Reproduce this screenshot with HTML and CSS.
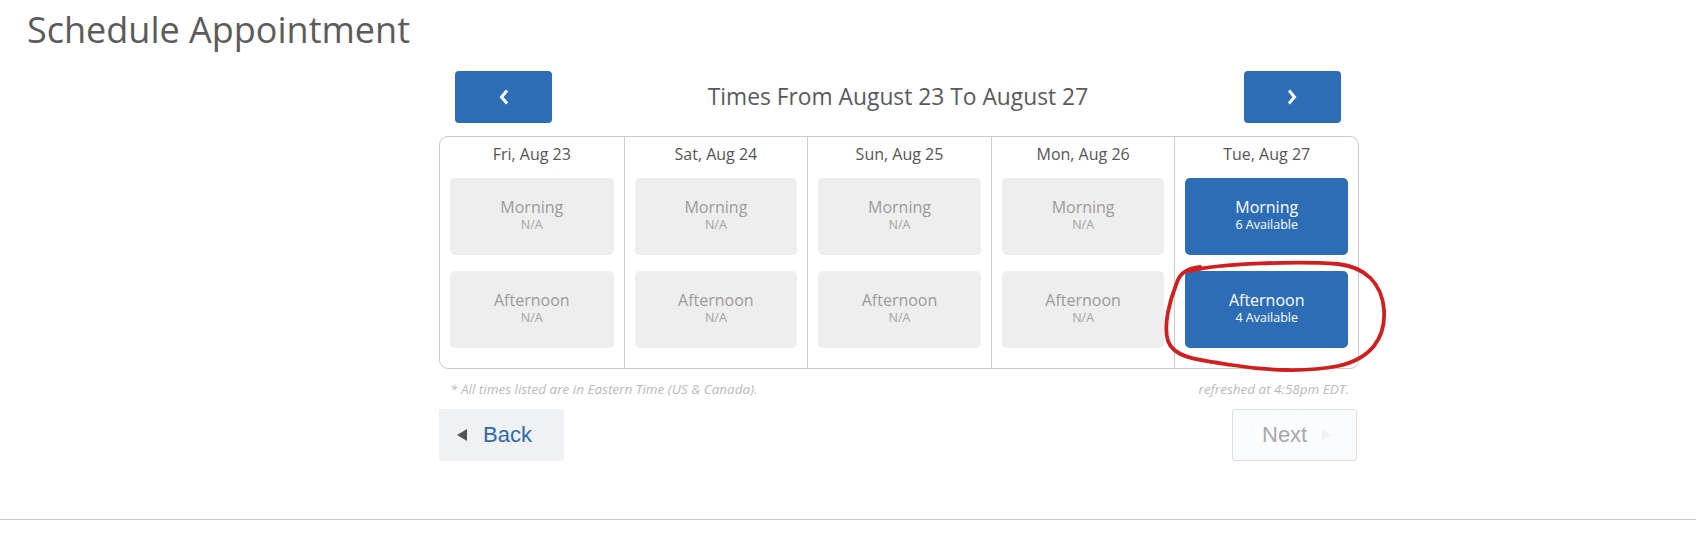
FILE: index.html
```html
<!DOCTYPE html>
<html>
<head>
  <meta charset="utf-8"/>
  <title>Schedule Appointment</title>
  <link rel="stylesheet" href="styles.css">
</head>
<body>

  <!-- ---------- PAGE TITLE ---------- -->
  <h1 class="page-title">Schedule Appointment</h1>

  <!-- ---------- SCHEDULER ---------- -->
  <div class="scheduler">

    <!-- Week navigation -->
    <div class="week-nav">
      <button type="button" class="nav-btn" aria-label="Previous week">
        <svg width="10" height="16" viewBox="0 0 10 16"><path d="M8 1.5 L2.5 8 L8 14.5" fill="none" stroke="#fff" stroke-width="3"/></svg>
      </button>
      <div class="week-title">Times From August 23 To August 27</div>
      <button type="button" class="nav-btn" aria-label="Next week">
        <svg width="10" height="16" viewBox="0 0 10 16"><path d="M2 1.5 L7.5 8 L2 14.5" fill="none" stroke="#fff" stroke-width="3"/></svg>
      </button>
    </div>

    <!-- Days grid -->
    <div class="days">
      <div class="day">
        <div class="day-name">Fri, Aug 23</div>
        <div class="slot"><span class="slot-name">Morning</span><span class="slot-count">N/A</span></div>
        <div class="slot"><span class="slot-name">Afternoon</span><span class="slot-count">N/A</span></div>
      </div>
      <div class="day">
        <div class="day-name">Sat, Aug 24</div>
        <div class="slot"><span class="slot-name">Morning</span><span class="slot-count">N/A</span></div>
        <div class="slot"><span class="slot-name">Afternoon</span><span class="slot-count">N/A</span></div>
      </div>
      <div class="day">
        <div class="day-name">Sun, Aug 25</div>
        <div class="slot"><span class="slot-name">Morning</span><span class="slot-count">N/A</span></div>
        <div class="slot"><span class="slot-name">Afternoon</span><span class="slot-count">N/A</span></div>
      </div>
      <div class="day">
        <div class="day-name">Mon, Aug 26</div>
        <div class="slot"><span class="slot-name">Morning</span><span class="slot-count">N/A</span></div>
        <div class="slot"><span class="slot-name">Afternoon</span><span class="slot-count">N/A</span></div>
      </div>
      <div class="day">
        <div class="day-name">Tue, Aug 27</div>
        <div class="slot open"><span class="slot-name">Morning</span><span class="slot-count">6 Available</span></div>
        <div class="slot open"><span class="slot-name">Afternoon</span><span class="slot-count">4 Available</span></div>
      </div>

      <!-- hand-drawn highlight over the afternoon slot -->
      <svg class="scribble" width="235" height="125" viewBox="0 0 235 125">
        <path d="M30 16 C60 8, 140 6, 178 9 C205 12, 222 28, 224 55 C226 84, 210 104, 178 111 C148 117, 108 116, 72 110 C38 105, 14 103, 8 86 C3 70, 10 45, 16 30 C19 20, 24 14, 40 12"
              fill="none" stroke="#cf2020" stroke-width="3.8" stroke-linecap="round"/>
      </svg>
    </div>

    <!-- Footnotes -->
    <div class="notes">
      <span>* All times listed are in Eastern Time (US &amp; Canada).</span>
      <span>refreshed at 4:58pm EDT.</span>
    </div>

    <!-- Back / Next -->
    <div class="actions">
      <button type="button" class="btn-back"><span class="tri-left"></span>Back</button>
      <button type="button" class="btn-next" disabled>Next<span class="tri-right"></span></button>
    </div>
  </div>

  <div class="page-footer"></div>

</body>
</html>
```

FILE: styles.css
```css
/* Basic reset */
* {
  box-sizing: border-box;
  margin: 0;
  padding: 0;
}
body {
  font-family: 'Open Sans', 'Noto Sans', sans-serif;
  background: #fff;
  color: #555;
}

/* ---------- TITLE ---------- */
.page-title {
  font-size: 36px;
  font-weight: 400;
  line-height: 40px;
  color: #5b5b5b;
  padding: 10px 0 0 27px;
}

/* ---------- SCHEDULER ---------- */
.scheduler {
  width: 920px;
  margin-left: 439px;
}
.week-nav {
  display: flex;
  align-items: center;
  justify-content: space-between;
  margin-top: 21px;
  padding: 0 18px 0 16px;
}
.nav-btn {
  width: 97px;
  height: 52px;
  background: #2c6db6;
  border: none;
  border-radius: 4px;
  display: flex;
  align-items: center;
  justify-content: center;
  cursor: pointer;
}
.week-title {
  font-size: 22.8px;
  color: #5a5a5a;
  margin-top: -2px;
}

/* ---------- DAYS GRID ---------- */
.days {
  position: relative;
  display: grid;
  grid-template-columns: repeat(5, 1fr);
  margin-top: 13px;
  border: 1px solid #cacaca;
  border-radius: 9px;
}
.day {
  padding: 6px 10px 20px;
  display: flex;
  flex-direction: column;
  gap: 16px;
}
.day + .day {
  border-left: 1px solid #cccccc;
}
.day-name {
  text-align: center;
  font-size: 16px;
  line-height: 22px;
  color: #555;
  margin-bottom: -3px;
}
.slot {
  height: 77px;
  background: #eeeeee;
  border-radius: 5px;
  display: flex;
  flex-direction: column;
  align-items: center;
  justify-content: center;
  padding-bottom: 4px;
  color: #9b9b9b;
}
.slot-name {
  font-size: 16px;
  line-height: 20px;
}
.slot-count {
  font-size: 12.5px;
  line-height: 15px;
  color: #a3a3a3;
}
.slot.open {
  background: #2c6db6;
  color: #fff;
}
.slot.open .slot-count {
  color: #fff;
}
.scribble {
  position: absolute;
  left: 720px;
  top: 118px;
  pointer-events: none;
  overflow: visible;
}

/* ---------- NOTES + ACTIONS ---------- */
.notes {
  display: flex;
  justify-content: space-between;
  margin-top: 12px;
  padding: 0 10px 0 11px;
  font-size: 13.5px;
  line-height: 17px;
  font-style: italic;
  color: #bababa;
}
.actions {
  display: flex;
  justify-content: space-between;
  margin-top: 11px;
  padding-right: 2px;
}
.btn-back,
.btn-next {
  width: 125px;
  height: 52px;
  font-family: 'Liberation Sans', Arial, sans-serif;
  font-size: 22px;
  border-radius: 3px;
  display: flex;
  align-items: center;
}
.btn-back {
  background: #eff1f4;
  border: none;
  color: #2f6aa6;
  padding-left: 18px;
  gap: 16px;
  cursor: pointer;
}
.tri-left {
  width: 0;
  height: 0;
  border-top: 6px solid transparent;
  border-bottom: 6px solid transparent;
  border-right: 10px solid #555;
}
.btn-next {
  background: #fbfcfd;
  border: 1px solid #dcdfe3;
  color: #a8a8a8;
  padding-left: 29px;
  gap: 15px;
}
.tri-right {
  width: 0;
  height: 0;
  border-top: 6px solid transparent;
  border-bottom: 6px solid transparent;
  border-left: 9px solid #f0f2f4;
}

/* ---------- FOOTER LINE ---------- */
.page-footer {
  margin-top: 58px;
  border-top: 1px solid #c6c6c6;
}
```
